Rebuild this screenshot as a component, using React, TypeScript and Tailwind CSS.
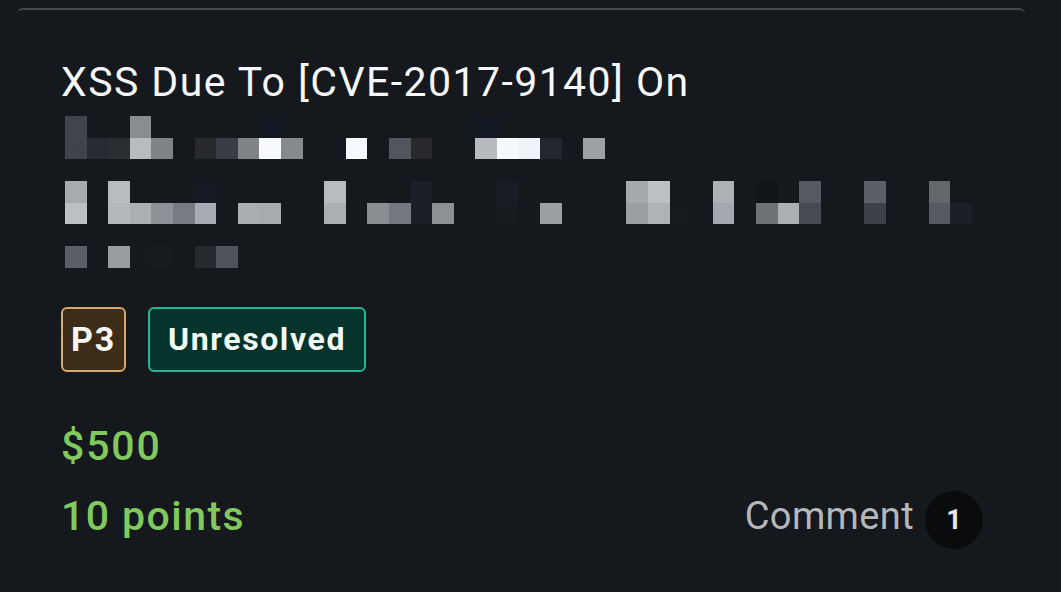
import React from 'react';

// pixelated (redacted) part of the title: [column, colour] per cell row
const mosaic: [number, string][][] = [
  [[0, '#41444b'], [3, '#8a8d90'], [9, '#121724'], [19, '#121724']],
  [
    [0, '#3f434a'], [1, '#272a32'], [2, '#2a2d32'], [3, '#b8bbbf'], [4, '#7f8286'],
    [6, '#27292d'], [7, '#393c42'], [8, '#808387'], [9, '#f7f9ff'], [10, '#878a8d'],
    [13, '#f6f9ff'], [15, '#52555c'], [16, '#27292d'], [19, '#b8bbbe'], [20, '#f6f9fc'],
    [21, '#f0f4f8'], [22, '#24262e'], [24, '#9ea1a4'],
  ],
  [],
  [
    [0, '#a8abae'], [2, '#b8bbbf'], [6, '#161a24'], [12, '#b8bbbf'], [16, '#1c1f27'],
    [20, '#191c24'], [26, '#a7aaad'], [27, '#bec1c4'], [29, '#15181c'], [30, '#aeb1b4'],
    [32, '#111518'], [34, '#575a61'], [37, '#5c5f66'], [40, '#63666a'],
  ],
  [
    [0, '#bcc0c3'], [2, '#b5b8bb'], [3, '#adb0b3'], [4, '#8e9195'], [5, '#787b82'],
    [6, '#a8abb3'], [8, '#abaeb1'], [9, '#a8abae'], [12, '#adb0b3'], [14, '#8a8d92'],
    [15, '#75787e'], [16, '#1c1f27'], [17, '#8e9194'], [20, '#181b20'], [22, '#9c9fa2'],
    [24, '#15181c'], [26, '#9c9fa2'], [27, '#b0b3b6'], [28, '#16191d'], [29, '#15181c'],
    [30, '#a5a8af'], [32, '#6e7276'], [33, '#adb0b3'], [34, '#464b53'], [37, '#3e4148'],
    [39, '#14181b'], [40, '#575a61'], [41, '#1c1f27'],
  ],
  [],
  [[0, '#5c6066'], [2, '#999c9f'], [4, '#181b1f'], [6, '#26292d'], [7, '#50545a']],
];

const Mosaic = () => (
  <div className="ml-[4px] mt-[8px] flex flex-col">
    {mosaic.map((row, r) => (
      <div key={r} className="flex h-[21.7px]">
        {Array.from({ length: 42 }).map((_, c) => {
          const cell = row.find(x => x[0] === c);
          return (
            <div
              key={c}
              className="h-full w-[21.6px] shrink-0"
              style={cell ? { backgroundColor: cell[1] } : undefined}
            />
          );
        })}
      </div>
    ))}
  </div>
);

const App = () => {
  return (
    <div
      className="w-[1061px] h-[592px] overflow-hidden bg-[#15181d] pt-[8px] pl-[17px]"
      style={{ fontFamily: 'Roboto, "Noto Sans", sans-serif' }}
    >
      <div className="w-[1008px] h-[600px] rounded-t-[6px] border-t-2 border-[#45484d] pt-[46px] pl-[44px] pr-[42px]">
        <h1 className="text-[41px] leading-[52px] font-normal tracking-[0.035em] text-[#f5f7fa]">
          XSS Due To [CVE-2017-9140] On
        </h1>
        <Mosaic />

        <div className="mt-[39px] flex gap-[22px]">
          <span className="flex h-[65px] w-[65px] items-center justify-center rounded-[6px] border-2 border-[#d7a86e] bg-[#3d2c17] text-[34px] font-bold tracking-[0.05em] text-[#f7f7f5]">
            P3
          </span>
          <span className="flex h-[65px] w-[218px] items-center justify-center rounded-[6px] border-2 border-[#27b595] bg-[#04342b] text-[32px] font-bold tracking-[0.05em] text-[#f3f8f6]">
            Unresolved
          </span>
        </div>

        <div className="mt-[50px] text-[41px] leading-[48px] font-medium tracking-[0.045em] text-[#80c95c]">
          $500
        </div>
        <div className="mt-[13px] flex items-center justify-between">
          <span className="text-[41px] leading-[48px] font-medium tracking-[0.035em] text-[#80c95c]">
            10 points
          </span>
          <div className="flex items-center gap-[11px]">
            <span className="text-[38px] leading-[48px] tracking-[0.01em] text-[#b4b7bb]">Comment</span>
            <span className="mt-[8px] flex h-[58px] w-[58px] items-center justify-center rounded-full bg-[#0a0b0d] text-[27px] font-bold text-[#e6e7e9]">
              1
            </span>
          </div>
        </div>
      </div>
    </div>
  );
};

export default App;
